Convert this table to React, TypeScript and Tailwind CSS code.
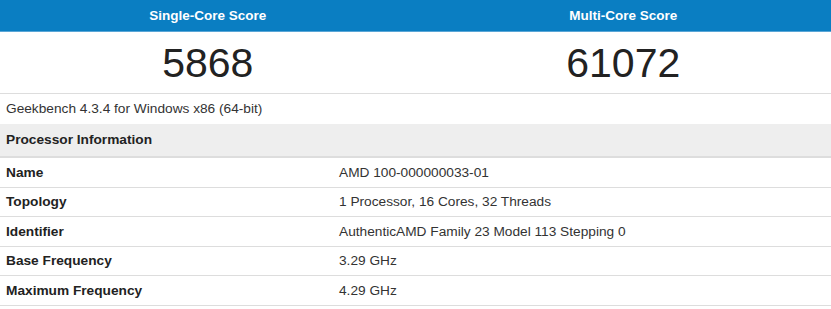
import React from "react";

const rows: [string, string][] = [
  ["Name", "AMD 100-000000033-01"],
  ["Topology", "1 Processor, 16 Cores, 32 Threads"],
  ["Identifier", "AuthenticAMD Family 23 Model 113 Stepping 0"],
  ["Base Frequency", "3.29 GHz"],
  ["Maximum Frequency", "4.29 GHz"],
];

export default function App() {
  return (
    <div
      className="w-[831px] h-[309px] bg-white text-[#333] overflow-hidden"
      style={{ fontFamily: '"Liberation Sans", Arial, sans-serif' }}
    >
      <div className="grid grid-cols-2 h-[32px] pt-[1px] bg-[#0a7ec2] border-b border-[#5aa6d6] text-white font-bold text-[13.5px]">
        <div className="flex items-center justify-center">Single-Core Score</div>
        <div className="flex items-center justify-center">Multi-Core Score</div>
      </div>
      <div className="grid grid-cols-2 h-[62px] border-b border-[#ddd] text-[41px] text-[#222]">
        <div className="flex items-center justify-center pt-[1px]">5868</div>
        <div className="flex items-center justify-center pt-[1px]">61072</div>
      </div>
      <div className="h-[30px] flex items-center px-[6px] text-[13.7px]">
        Geekbench 4.3.4 for Windows x86 (64-bit)
      </div>
      <div className="h-[34px] flex items-center px-[6px] pt-[1px] bg-[#eee] border-b-2 border-[#ddd] font-bold text-[13.7px] text-[#222]">
        Processor Information
      </div>
      {rows.map(([k, v]) => (
        <div key={k} className="grid grid-cols-[333px_1fr] h-[29.5px] border-b border-[#ddd] text-[13.7px] pt-[2px]">
          <div className="flex items-center px-[6px] font-bold text-[#222]">{k}</div>
          <div className="flex items-center px-[6px]">{v}</div>
        </div>
      ))}
    </div>
  );
}
